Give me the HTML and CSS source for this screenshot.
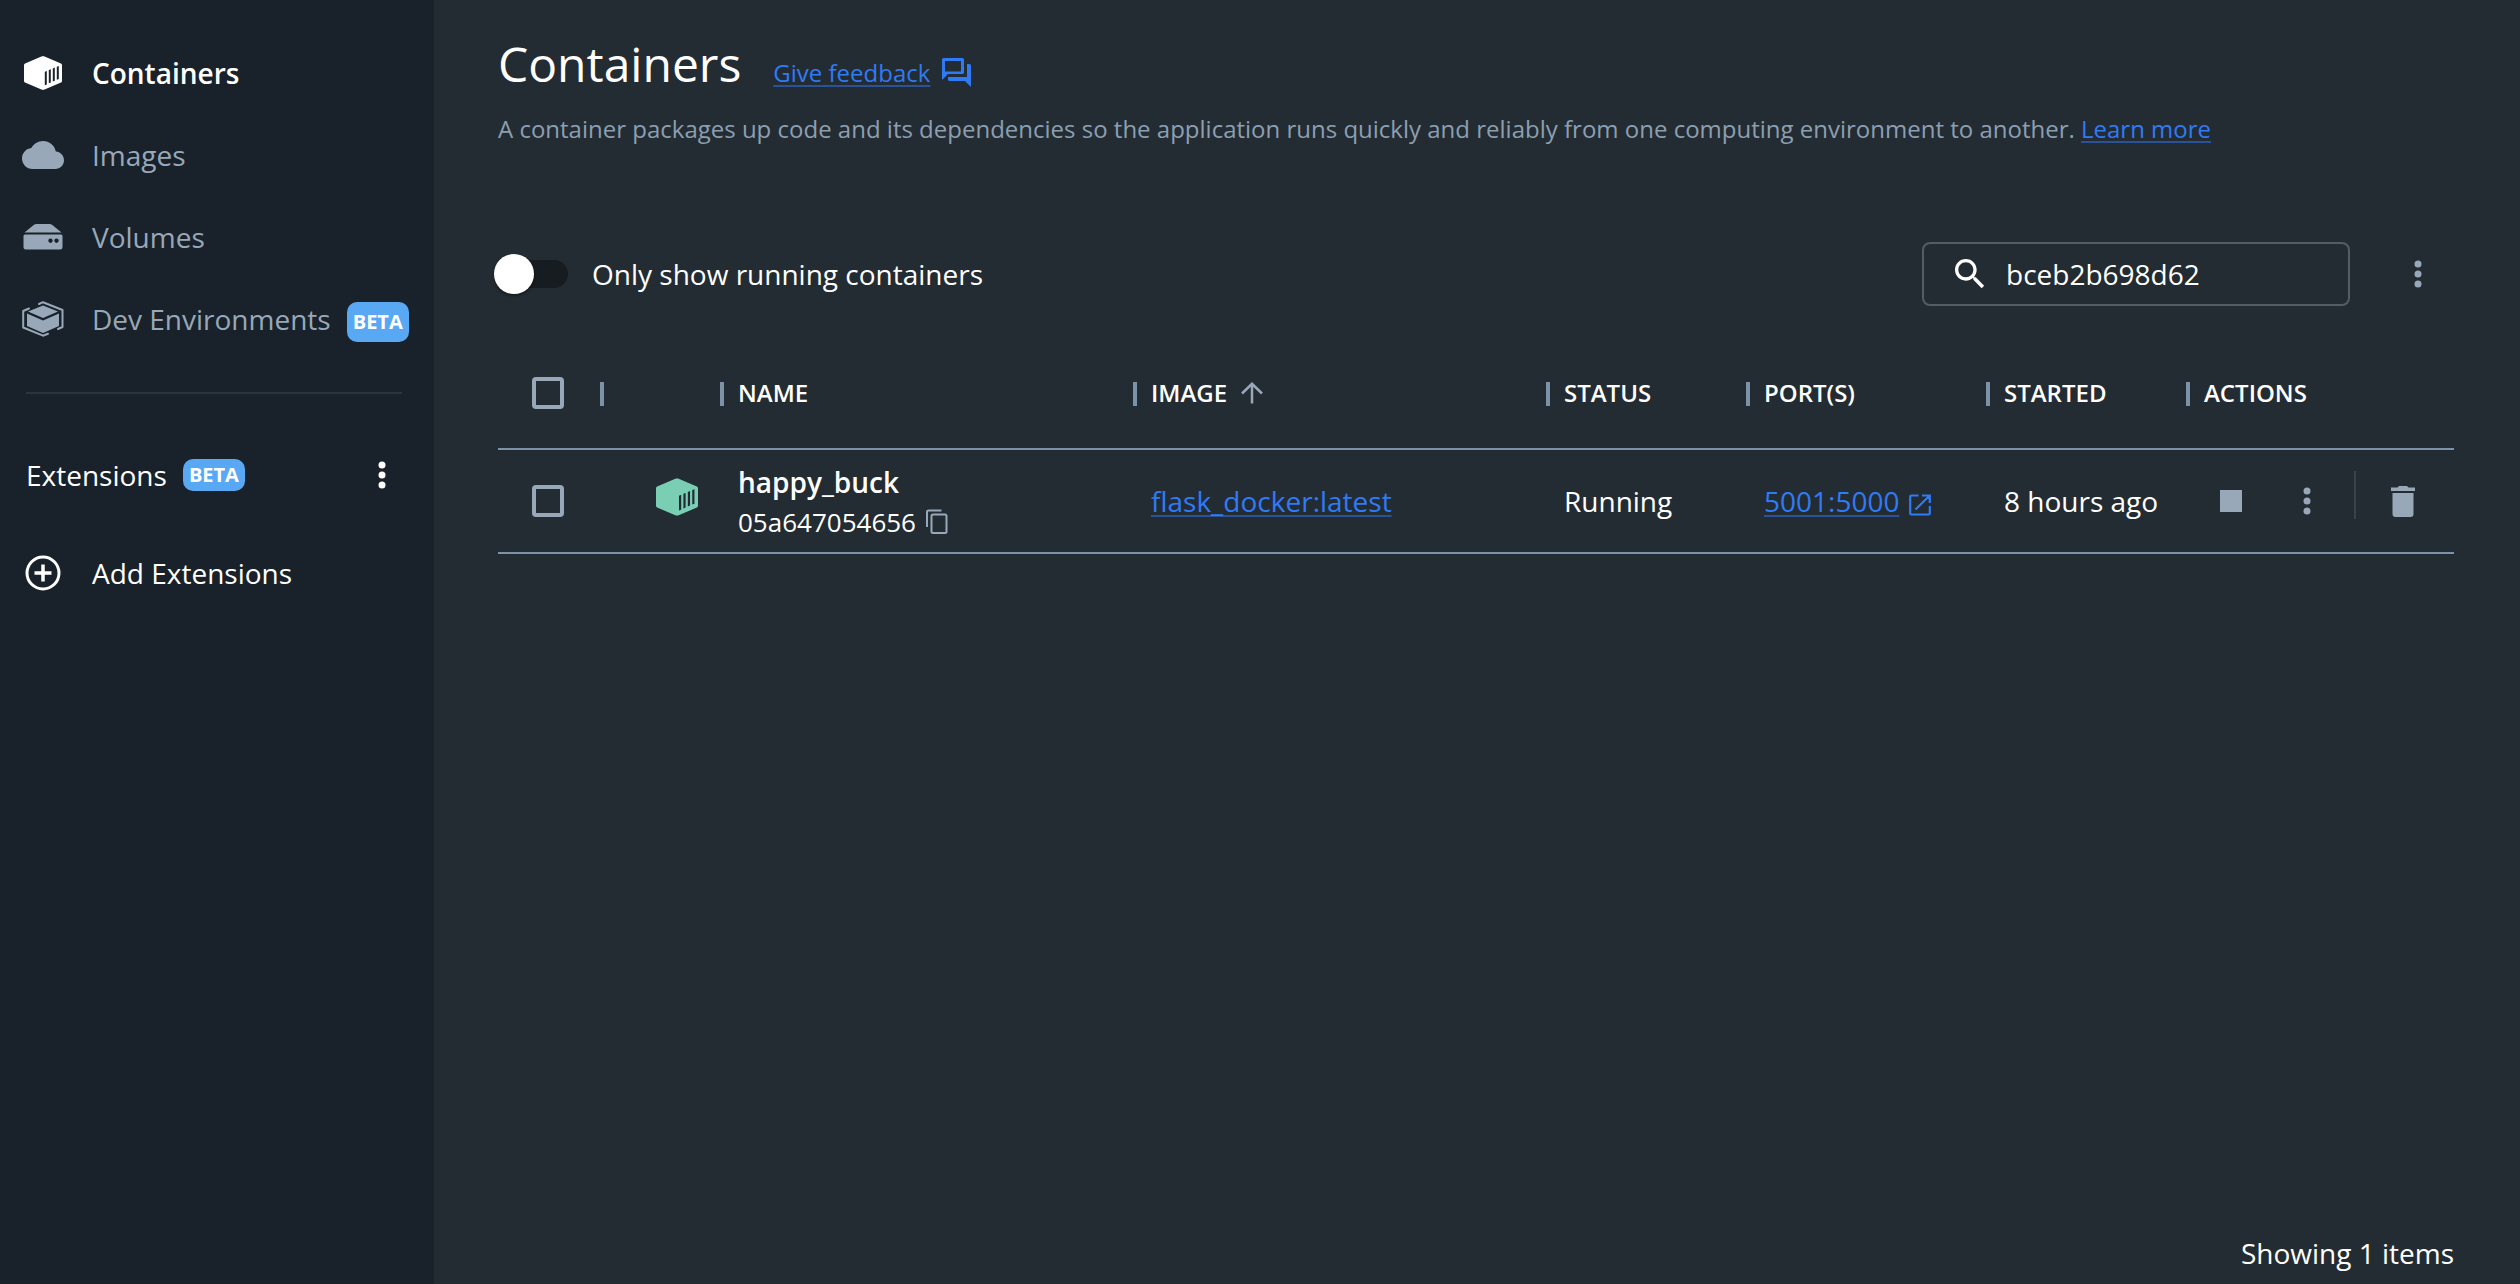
FILE: index.html
```html
<!DOCTYPE html>
<html lang="en">
<head>
<meta charset="utf-8">
<title>Containers</title>
<link rel="stylesheet" href="styles.css">
</head>
<body>
<svg class="sprite" aria-hidden="true">
  <symbol id="box" viewBox="0 0 38 34">
    <path fill="currentColor" fill-rule="evenodd" d="M18 .3Q19 0 20 .3L37 7.5Q38 8 38 9V25Q38 26 37 26.5L20 33.7Q19 34 18 33.7L1 26.5Q0 26 0 25V9Q0 8 1 7.500ZM20.800 15.800V29.300L22.800 28.500V15ZM24.800 14.100V27.300L26.800 26.500V13.300ZM28.800 12.400V25.500L30.800 24.700V11.600ZM32.800 10.700V23.800L34.800 23V9.900Z"/>
  </symbol>
  <symbol id="dots" viewBox="0 0 8 28">
    <circle cx="4" cy="4" r="3.500" fill="currentColor"/><circle cx="4" cy="14" r="3.500" fill="currentColor"/><circle cx="4" cy="24" r="3.500" fill="currentColor"/>
  </symbol>
</svg>
<div class="app">
  <aside class="sidebar">
    <nav class="nav">
      <a class="nav-item active" href="#containers"><span class="nav-icon"><svg width="38" height="34"><use href="#box"/></svg></span>Containers</a>
      <a class="nav-item" href="#images"><span class="nav-icon"><svg width="42" height="42" viewBox="0 0 24 24"><path fill="currentColor" d="M19.350 10.040C18.670 6.590 15.640 4 12 4 9.110 4 6.600 5.640 5.350 8.040 2.340 8.360 0 10.910 0 14c0 3.310 2.690 6 6 6h13c2.760 0 5-2.240 5-5 0-2.640-2.050-4.780-4.650-4.960z"/></svg></span>Images</a>
      <a class="nav-item" href="#volumes"><span class="nav-icon"><svg width="40" height="26" viewBox="0 0 40 26"><path fill="currentColor" fill-rule="evenodd" d="M11 .8Q12 0 13.500 0H26.500Q28 0 29 .8L38.500 8.500H1.500ZM2 10.500H38Q39.500 10.500 39.500 12V23Q39.500 25.500 37 25.500H3Q.5 25.500 .5 23V12Q.5 10.500 2 10.500ZM27.500 14.500a2.200 2.200 0 1 0 .01 0ZM33.500 14.500a2.200 2.200 0 1 0 .01 0Z"/></svg></span>Volumes</a>
      <a class="nav-item" href="#dev"><span class="nav-icon"><svg width="42" height="36" viewBox="0 0 42 36"><g fill="currentColor"><path d="M21 4.500 36 10.500 21 17 6 10.500Z"/><path d="M5 12.500 21 19.500 37 12.500V25L21 32 5 25Z"/></g><g fill="none" stroke="currentColor" stroke-width="2" stroke-linejoin="round" stroke-linecap="round"><path d="M17 3 21 1.200 40.500 9V26L36 28"/><path d="M7 7.500 1.200 10V26.500L21 34.700 26 32.800"/></g></svg></span>Dev Environments<span class="badge badge-tall">BETA</span></a>
    </nav>
    <div class="ext-head"><span>Extensions</span><span class="badge">BETA</span><button class="icon-btn ext-menu" aria-label="Extensions menu"><svg width="8" height="28"><use href="#dots"/></svg></button></div>
    <a class="nav-item add" href="#add"><span class="nav-icon"><svg width="36" height="36" viewBox="0 0 36 36" fill="none" stroke="currentColor"><circle cx="18" cy="18" r="16" stroke-width="3"/><path stroke-width="3.500" d="M18 9.500V26.500M9.500 18H26.500"/></svg></span>Add Extensions</a>
  </aside>
  <main class="main">
    <header class="title-row">
      <h1>Containers</h1>
      <a class="feedback" href="#feedback"><span class="link">Give feedback</span><svg width="30" height="30" viewBox="0 0 30 30"><path fill="currentColor" fill-rule="evenodd" d="M1.500 0H20.500Q22 0 22 1.500V14.500Q22 16 20.500 16H6L0 22V1.500Q0 0 1.500 0ZM3 3V13.500H19V3ZM25 6H27.500Q29 6 29 7.500V29L23 23H7.500Q6 23 6 21.500V19H25Z"/></svg></a>
    </header>
    <p class="intro">A container packages up code and its dependencies so the application runs quickly and reliably from one computing environment to another. <a class="link" href="#learn">Learn more</a></p>
    <div class="toolbar">
      <label class="switch"><input type="checkbox" role="switch">Only show running containers</label>
      <div class="search"><svg width="40" height="40" viewBox="0 0 24 24"><path fill="currentColor" d="M15.500 14h-.79l-.28-.27C15.410 12.590 16 11.110 16 9.500 16 5.910 13.090 3 9.500 3S3 5.910 3 9.500 5.910 16 9.500 16c1.610 0 3.090-.59 4.230-1.570l.27.28v.79l5 4.990L20.490 19l-4.990-5zm-6 0C7.010 14 5 11.990 5 9.500S7.010 5 9.500 5 14 7.010 14 9.500 11.990 14 9.500 14z"/></svg><input type="text" aria-label="Search" value="bceb2b698d62"></div>
      <button class="icon-btn muted toolbar-menu" aria-label="More options"><svg width="8" height="28"><use href="#dots"/></svg></button>
    </div>
    <table class="grid">
      <colgroup><col class="c-check"><col class="c-icon"><col><col><col class="c-status"><col class="c-ports"><col class="c-started"><col class="c-actions"></colgroup>
      <thead><tr>
        <th class="check"><input type="checkbox" aria-label="Select all"></th>
        <th aria-label="Type"></th><th>NAME</th>
        <th><span class="sorted">IMAGE<svg width="22" height="22" viewBox="0 0 22 22" fill="none" stroke="currentColor" stroke-width="2.500"><path d="M11 21.500V2M1 11.500 11 1.800 21 11.500"/></svg></span></th>
        <th>STATUS</th><th>PORT(S)</th><th>STARTED</th><th>ACTIONS</th>
      </tr></thead>
      <tbody><tr>
        <td class="check"><input type="checkbox" aria-label="Select happy_buck"></td>
        <td class="type"><svg width="42" height="38"><use href="#box"/></svg></td>
        <td class="identity"><div class="name">happy_buck</div><div class="cid">05a647054656<button class="icon-btn muted" aria-label="Copy ID"><svg width="22" height="26" viewBox="0 0 22 26" fill="none" stroke="currentColor" stroke-width="2"><path d="M1 18V3Q1 1.500 2.500 1.500H15.500"/><rect x="5.500" y="5.500" width="15" height="18.500" rx="1.500"/></svg></button></div></td>
        <td><a class="link" href="#image">flask_docker:latest</a></td>
        <td>Running</td>
        <td><a class="port" href="#port"><span class="link">5001:5000</span><svg width="22" height="22" viewBox="0 0 22 22" fill="none" stroke="currentColor" stroke-width="2.200"><path d="M9.500 1.500H2.500Q1.200 1.500 1.200 2.800V19.200Q1.200 20.500 2.500 20.500H19.500Q20.800 20.500 20.800 19.200V12M13 1.500H20.800V9M20.500 1.800 6.500 15.500"/></svg></a></td>
        <td>8 hours ago</td>
        <td class="actions"><div class="action-row">
          <button class="icon-btn muted stop" aria-label="Stop"><svg width="22" height="22"><rect width="22" height="22" fill="currentColor"/></svg></button>
          <button class="icon-btn muted" aria-label="Container menu"><svg width="8" height="28"><use href="#dots"/></svg></button>
          <span class="rule"></span>
          <button class="icon-btn muted" aria-label="Delete"><svg width="24" height="31" viewBox="0 0 24 31"><path fill="currentColor" d="M0 1.500H6.500L8 0H16L17.500 1.500H24V5H0ZM1.500 7H22.500V28Q22.500 31 19.500 31H4.500Q1.500 31 1.500 28Z"/></svg></button>
        </div></td>
      </tr></tbody>
    </table>
    <footer class="footer">Showing 1 items</footer>
  </main>
</div>
</body>
</html>
```
FILE: styles.css
```css
* { box-sizing: border-box; }
body {
  margin: 0;
  background: #242c33;
  color: #fff;
  font: 28px/40px "Open Sans", "Noto Sans", sans-serif;
}
svg { display: block; flex: none; }
.sprite { position: absolute; width: 0; height: 0; }
.app { display: flex; min-height: 100vh; }
.sidebar { flex: none; width: 434px; padding: 32px 0; background: #19222a; }
.nav { display: flex; flex-direction: column; margin: 0 32px 0 26px; padding-bottom: 32px; border-bottom: 2px solid #2b343c; }
.nav-item {
  display: flex;
  align-items: center;
  height: 82px;
  margin-left: -8px;
  white-space: nowrap;
  color: #98a8b8;
  text-decoration: none;
}
.nav-item.active { color: #fff; font-weight: 600; }
.nav-icon { display: flex; flex: none; justify-content: center; width: 50px; margin-right: 24px; }
.badge {
  margin-left: 16px;
  padding: 0 6px;
  border-radius: 10px;
  background: #58a8f3;
  color: #fff;
  font-size: 20px;
  line-height: 32px;
  font-weight: 700;
}
.badge-tall { margin-top: 6px; line-height: 40px; }
.ext-head { display: flex; align-items: center; height: 82px; margin: 40px 32px 0 26px; }
.icon-btn { display: flex; padding: 0; border: 0; background: none; color: #fff; cursor: pointer; }
.muted { color: #98a8b8; }
.ext-menu { margin: 0 16px 0 auto; }
.add { margin: 16px 0 0 18px; color: #fff; }

.main { display: flex; flex: 1; flex-direction: column; min-width: 0; padding: 32px 66px 11px 64px; }
.title-row { display: flex; align-items: baseline; gap: 32px; }
h1 { margin: 0; font-size: 48px; line-height: 64px; font-weight: 400; }
.link { color: #2f7bf5; text-decoration: underline; text-decoration-color: #2a5299; text-decoration-thickness: 2px; text-underline-offset: 3px; }
.feedback { display: flex; align-items: center; gap: 12px; color: #2f7bf5; font-size: 24px; text-decoration: none; }
.intro { margin: 13px 0 0; color: #8c9fb1; font-size: 24px; }
.toolbar { display: flex; align-items: center; height: 64px; margin-top: 93px; }
.switch { display: flex; align-items: center; gap: 24px; }
.switch input {
  position: relative;
  appearance: none;
  width: 68px;
  height: 28px;
  margin: 0 0 0 2px;
  border-radius: 14px;
  background: #171c20;
}
.switch input::before {
  content: "";
  position: absolute;
  top: -6px;
  left: -6px;
  width: 40px;
  height: 40px;
  border-radius: 50%;
  background: #fff;
  box-shadow: 0 2px 3px #0006;
}
.search {
  display: flex;
  align-items: center;
  gap: 16px;
  width: 428px;
  height: 64px;
  margin-left: auto;
  padding: 0 26px;
  border: 2px solid #565d62;
  border-radius: 8px;
}
.search input { width: 100%; min-width: 0; padding: 0; border: 0; outline: 0; background: none; color: #fff; font: inherit; }
.toolbar-menu { margin: 0 32px 0 64px; }

.grid { width: 100%; margin-top: 32px; table-layout: fixed; border-collapse: collapse; }
.c-check { width: 104px; }
.c-icon { width: 120px; }
.c-status { width: 200px; }
.c-ports { width: 240px; }
.c-started { width: 200px; }
.c-actions { width: 266px; }
th, td { padding: 0 16px; border-bottom: 2px solid #7c92a8; text-align: left; white-space: nowrap; }
th { position: relative; height: 111px; font-size: 24px; font-weight: 600; }
th:not(:last-child)::after {
  content: "";
  position: absolute;
  top: 44px;
  right: -2px;
  width: 4px;
  height: 24px;
  background: #7c92a8;
}
td { height: 104px; }
.check { padding: 0 0 0 34px; }
.check input { display: block; appearance: none; width: 32px; height: 32px; margin: 0; border: 4px solid #98a8b8; border-radius: 4px; }
.sorted { display: flex; align-items: center; gap: 14px; }
.sorted svg { color: #98a8b8; }
.type { padding: 0 24px 8px 0; }
.type svg { margin-left: auto; color: #79ceb4; }
.identity { padding-top: 2px; }
.name { font-weight: 600; }
.cid { display: flex; align-items: center; gap: 10px; font-size: 26px; }
.port { display: flex; align-items: center; gap: 10px; color: #2f7bf5; text-decoration: none; }
.port svg { margin-top: 8px; }
.actions { padding: 0 0 0 20px; }
.action-row { display: flex; align-items: center; gap: 24px; }
.action-row .icon-btn { justify-content: center; width: 46px; }
.action-row .stop { margin-right: 6px; }
.rule { width: 2px; height: 48px; margin-bottom: 12px; background: #3a434a; }
.footer { margin-top: auto; text-align: right; }
```
